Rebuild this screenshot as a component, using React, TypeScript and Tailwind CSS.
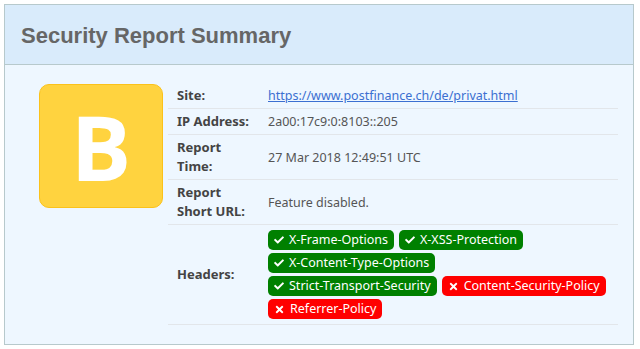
import React from 'react';
import { FaCheck, FaTimes } from 'react-icons/fa';

type Header = { name: string; ok: boolean };

// grouped the way the headers wrap in the cell
const HEADER_LINES: Header[][] = [
  [
    { name: 'X-Frame-Options', ok: true },
    { name: 'X-XSS-Protection', ok: true },
  ],
  [{ name: 'X-Content-Type-Options', ok: true }],
  [
    { name: 'Strict-Transport-Security', ok: true },
    { name: 'Content-Security-Policy', ok: false },
  ],
  [{ name: 'Referrer-Policy', ok: false }],
];

function Badge({ name, ok }: Header) {
  return (
    <span
      className={`inline-flex items-center gap-[5px] h-[20px] px-[6px] rounded-[5px] text-white text-[12.5px] leading-none ${
        ok ? 'bg-[#008000]' : 'bg-[#ff0000]'
      }`}
    >
      {ok ? <FaCheck className="w-[10px] h-[10px]" /> : <FaTimes className="w-[11px] h-[11px]" />}
      {name}
    </span>
  );
}

function Row({ label, children }: { label: React.ReactNode; children: React.ReactNode }) {
  return (
    <div className="flex border-b border-[#e2e6ea]">
      <div className="w-[100px] shrink-0 px-[9px] py-[3px] text-[13px] font-bold text-[#444] flex items-center">{label}</div>
      <div className="flex-1 py-[3px] text-[12.5px] text-[#555] flex items-center">{children}</div>
    </div>
  );
}

export default function App() {
  return (
    <div className="w-[640px] h-[349px] bg-white pt-[4px] pl-[4px]" style={{ fontFamily: '"Noto Sans", "Open Sans", sans-serif' }}>
      <div className="w-[630px] h-[341px] border border-[#b7c9cc] bg-[#eef7ff] flex flex-col">
        <div className="h-[60px] shrink-0 bg-[#d9ebfb] border-b border-[#b7c9cc] flex items-center px-[16px]">
          <h1 className="text-[22px] font-bold text-[#666] pt-[2px]" style={{ fontFamily: '"Liberation Sans", Arial, sans-serif' }}>
            Security Report Summary
          </h1>
        </div>
        <div className="flex pl-[34px] pr-[15px] pt-[18px]">
          <div className="w-[124px] h-[124px] shrink-0 mt-[1px] rounded-[10px] bg-[#ffd33f] border border-[#fbc21a] flex items-center justify-center">
            <span className="text-white font-bold text-[90px] leading-none" style={{ fontFamily: '"Open Sans", sans-serif' }}>B</span>
          </div>
          <div className="flex-1 ml-[5px] leading-[19px]">
            <Row label="Site:">
              <a href="#" className="text-[#3b6fd1] underline">https://www.postfinance.ch/de/privat.html</a>
            </Row>
            <Row label="IP Address:">2a00:17c9:0:8103::205</Row>
            <Row label={<span>Report<br />Time:</span>}>27 Mar 2018 12:49:51 UTC</Row>
            <Row label={<span>Report<br />Short URL:</span>}>Feature disabled.</Row>
            <Row label="Headers:">
              <div className="flex flex-col gap-[3px] py-[2px]">
                {HEADER_LINES.map((line, i) => (
                  <div key={i} className="flex gap-[5px]">
                    {line.map(h => (
                      <Badge key={h.name} {...h} />
                    ))}
                  </div>
                ))}
              </div>
            </Row>
          </div>
        </div>
      </div>
    </div>
  );
}
